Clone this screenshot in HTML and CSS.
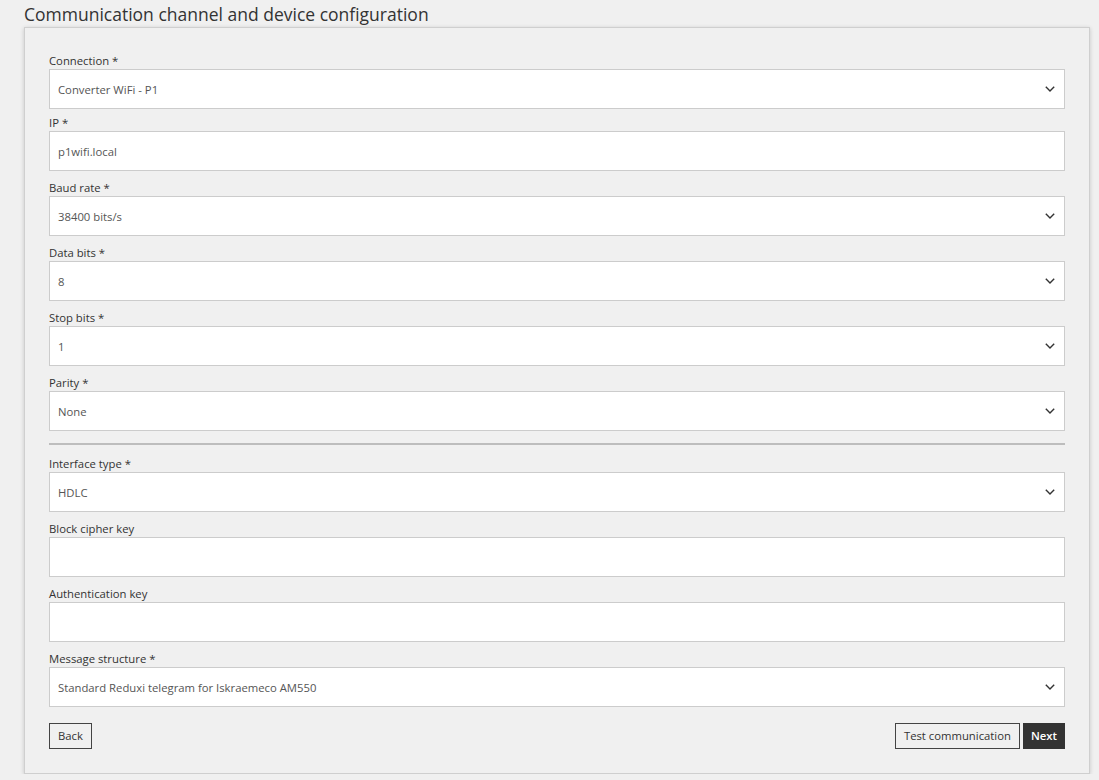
FILE: index.html
```html
<!DOCTYPE html>
<html>
<head>
<meta charset="utf-8">
<link rel="stylesheet" href="styles.css">
</head>
<body>
<h1 class="title">Communication channel and device configuration</h1>
<div class="card">
  <div class="field first">
    <div class="label">Connection *</div>
    <div class="control select"><span>Converter WiFi - P1</span><svg class="chev" width="10" height="6" viewBox="0 0 10 6"><path d="M0.8 0.8 L5 5 L9.2 0.8" fill="none" stroke="#333" stroke-width="1.4"/></svg></div>
  </div>
  <div class="field">
    <div class="label">IP *</div>
    <div class="control"><span>p1wifi.local</span></div>
  </div>
  <div class="field">
    <div class="label">Baud rate *</div>
    <div class="control select"><span>38400 bits/s</span><svg class="chev" width="10" height="6" viewBox="0 0 10 6"><path d="M0.8 0.8 L5 5 L9.2 0.8" fill="none" stroke="#333" stroke-width="1.4"/></svg></div>
  </div>
  <div class="field">
    <div class="label">Data bits *</div>
    <div class="control select"><span>8</span><svg class="chev" width="10" height="6" viewBox="0 0 10 6"><path d="M0.8 0.8 L5 5 L9.2 0.8" fill="none" stroke="#333" stroke-width="1.4"/></svg></div>
  </div>
  <div class="field">
    <div class="label">Stop bits *</div>
    <div class="control select"><span>1</span><svg class="chev" width="10" height="6" viewBox="0 0 10 6"><path d="M0.8 0.8 L5 5 L9.2 0.8" fill="none" stroke="#333" stroke-width="1.4"/></svg></div>
  </div>
  <div class="field">
    <div class="label">Parity *</div>
    <div class="control select"><span>None</span><svg class="chev" width="10" height="6" viewBox="0 0 10 6"><path d="M0.8 0.8 L5 5 L9.2 0.8" fill="none" stroke="#333" stroke-width="1.4"/></svg></div>
  </div>
  <div class="sep"></div>
  <div class="field">
    <div class="label">Interface type *</div>
    <div class="control select"><span>HDLC</span><svg class="chev" width="10" height="6" viewBox="0 0 10 6"><path d="M0.8 0.8 L5 5 L9.2 0.8" fill="none" stroke="#333" stroke-width="1.4"/></svg></div>
  </div>
  <div class="field">
    <div class="label">Block cipher key</div>
    <div class="control"><span></span></div>
  </div>
  <div class="field">
    <div class="label">Authentication key</div>
    <div class="control"><span></span></div>
  </div>
  <div class="field last">
    <div class="label">Message structure *</div>
    <div class="control select"><span>Standard Reduxi telegram for Iskraemeco AM550</span><svg class="chev" width="10" height="6" viewBox="0 0 10 6"><path d="M0.8 0.8 L5 5 L9.2 0.8" fill="none" stroke="#333" stroke-width="1.4"/></svg></div>
  </div>
  <div class="actions">
    <button class="btn">Back</button>
    <div class="right">
      <button class="btn">Test communication</button>
      <button class="btn primary">Next</button>
    </div>
  </div>
</div>
</body>
</html>
```
FILE: styles.css
```css
html, body {
  margin: 0;
  padding: 0;
  background: #f0f0f0;
}
body {
  font-family: "Open Sans", "Liberation Sans", sans-serif;
  color: #333;
  padding: 2px 9px 0 24px;
}
.title {
  margin: 0;
  font-size: 17.5px;
  font-weight: 400;
  line-height: 25px;
  color: #333;
}
.card {
  background: #f0f0f0;
  border: 1px solid #cfcfcf;
  box-shadow: 0 1px 4px rgba(0, 0, 0, 0.18);
  padding: 24px 24px 24px 24px;
}
.field {
  margin-bottom: 8px;
}
.field.first {
  margin-bottom: 5px;
}
.field.last {
  margin-bottom: 0;
}
.label {
  font-size: 11.3px;
  line-height: 17px;
  color: #333;
}
.control {
  height: 40px;
  box-sizing: border-box;
  background: #fff;
  border: 1px solid #cccccc;
  display: flex;
  align-items: center;
  justify-content: space-between;
  padding: 0 9px 0 8px;
  font-size: 11.3px;
  color: #555;
}
.chev {
  display: block;
}
.sep {
  height: 2px;
  background: #bdbdbd;
  margin: 12px 0 10px 0;
}
.actions {
  margin-top: 16px;
  display: flex;
  justify-content: space-between;
  align-items: center;
}
.right {
  display: flex;
  gap: 3px;
}
.btn {
  font-family: "Open Sans", "Liberation Sans", sans-serif;
  font-size: 11.3px;
  height: 26px;
  line-height: 24px;
  padding: 0 8px;
  background: transparent;
  border: 1px solid #444;
  color: #333;
  border-radius: 0;
  cursor: pointer;
}
.btn.primary {
  background: #333;
  border-color: #333;
  color: #fff;
  font-weight: 600;
  padding: 0 7px;
}
```
